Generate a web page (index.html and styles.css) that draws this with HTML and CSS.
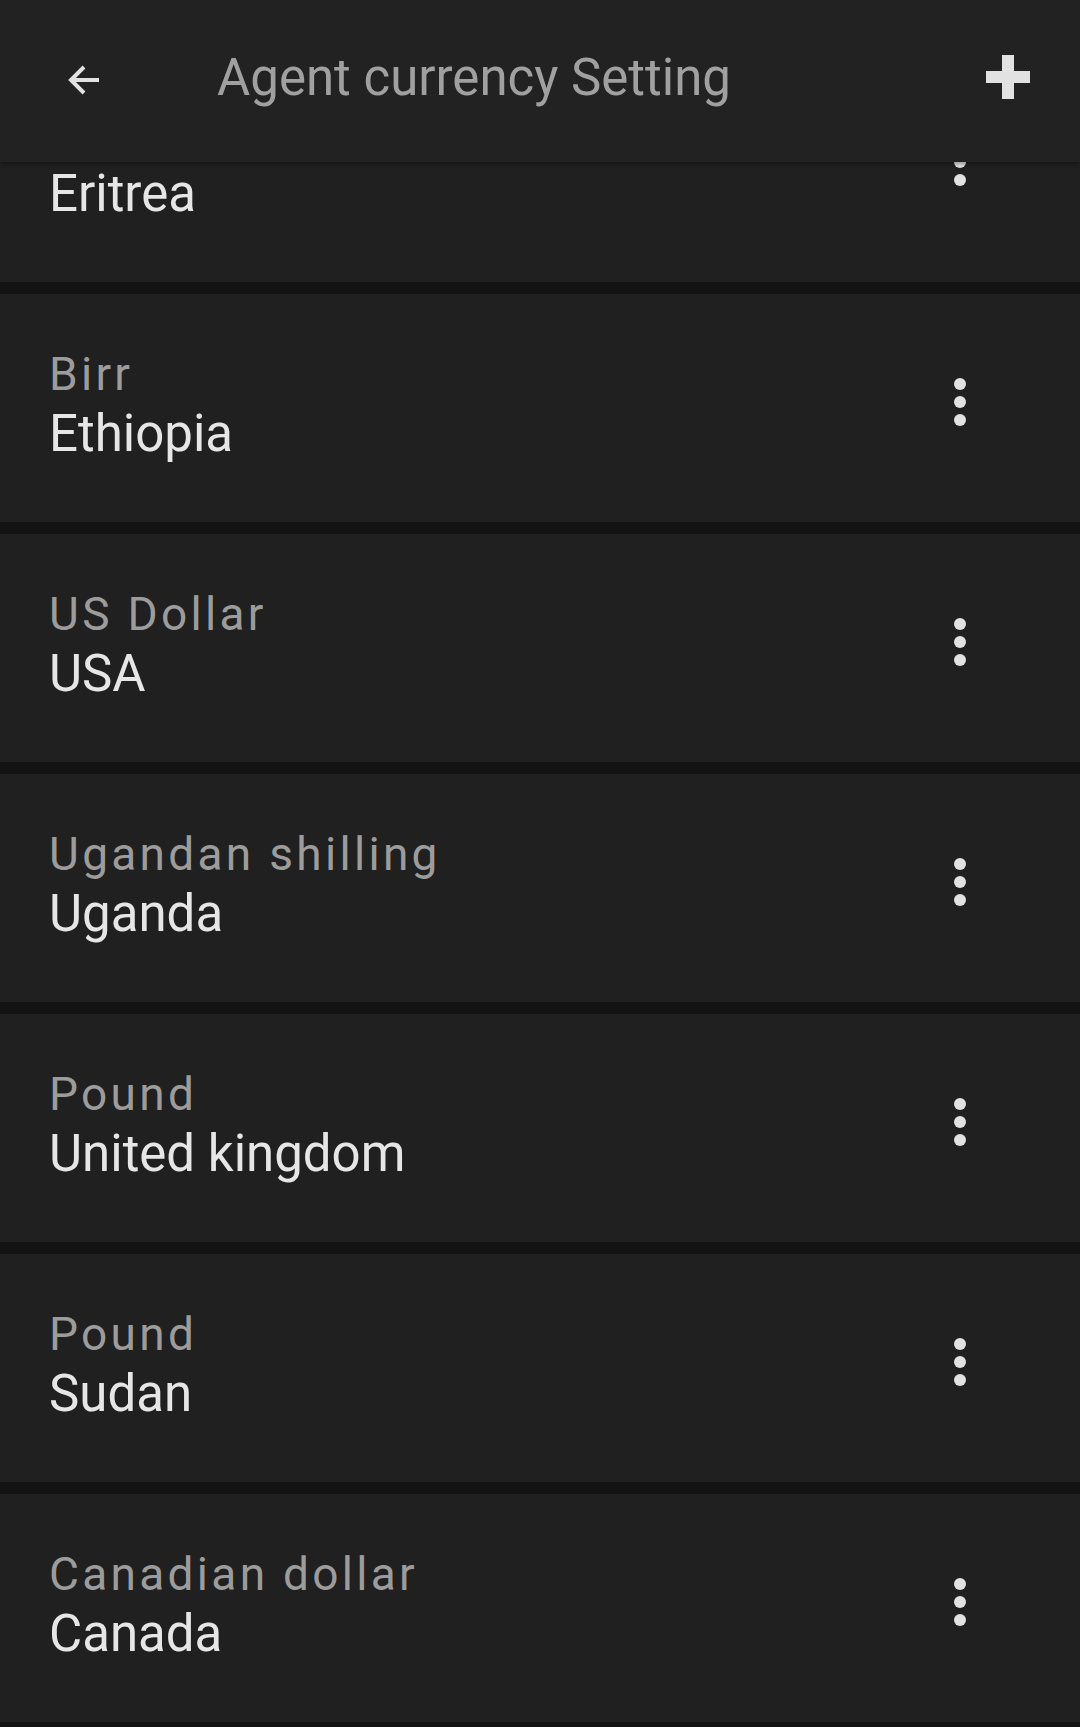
FILE: index.html
```html
<!DOCTYPE html>
<html>
<head>
<meta charset="utf-8">
<link rel="stylesheet" href="styles.css">
</head>
<body>
<header class="appbar">
  <svg class="back" width="34" height="32" viewBox="0 0 34 32"><path d="M32 16H4M17 3L4 16l13 13" fill="none" stroke="#e2e2e2" stroke-width="4"/></svg>
  <div class="title">Agent currency Setting</div>
  <svg class="plus" width="44" height="44" viewBox="0 0 44 44"><path d="M16 0h12v16h16v12H28v16H16V28H0V16h16z" fill="#e2e2e2"/></svg>
</header>
<main class="list">
  <div class="card"><div class="texts"><div class="sub">Nakfa</div><div class="main">Eritrea</div></div><svg class="dots" width="12" height="48" viewBox="0 0 12 48"><circle cx="6" cy="6" r="6"/><circle cx="6" cy="24" r="6"/><circle cx="6" cy="42" r="6"/></svg></div>
  <div class="card"><div class="texts"><div class="sub">Birr</div><div class="main">Ethiopia</div></div><svg class="dots" width="12" height="48" viewBox="0 0 12 48"><circle cx="6" cy="6" r="6"/><circle cx="6" cy="24" r="6"/><circle cx="6" cy="42" r="6"/></svg></div>
  <div class="card"><div class="texts"><div class="sub">US Dollar</div><div class="main">USA</div></div><svg class="dots" width="12" height="48" viewBox="0 0 12 48"><circle cx="6" cy="6" r="6"/><circle cx="6" cy="24" r="6"/><circle cx="6" cy="42" r="6"/></svg></div>
  <div class="card"><div class="texts"><div class="sub">Ugandan shilling</div><div class="main">Uganda</div></div><svg class="dots" width="12" height="48" viewBox="0 0 12 48"><circle cx="6" cy="6" r="6"/><circle cx="6" cy="24" r="6"/><circle cx="6" cy="42" r="6"/></svg></div>
  <div class="card"><div class="texts"><div class="sub">Pound</div><div class="main">United kingdom</div></div><svg class="dots" width="12" height="48" viewBox="0 0 12 48"><circle cx="6" cy="6" r="6"/><circle cx="6" cy="24" r="6"/><circle cx="6" cy="42" r="6"/></svg></div>
  <div class="card"><div class="texts"><div class="sub">Pound</div><div class="main">Sudan</div></div><svg class="dots" width="12" height="48" viewBox="0 0 12 48"><circle cx="6" cy="6" r="6"/><circle cx="6" cy="24" r="6"/><circle cx="6" cy="42" r="6"/></svg></div>
  <div class="card"><div class="texts"><div class="sub">Canadian dollar</div><div class="main">Canada</div></div><svg class="dots" width="12" height="48" viewBox="0 0 12 48"><circle cx="6" cy="6" r="6"/><circle cx="6" cy="24" r="6"/><circle cx="6" cy="42" r="6"/></svg></div>
</main>
</body>
</html>
```
FILE: styles.css
```css
html, body {
  margin: 0;
  padding: 0;
  background: #121212;
  font-family: Roboto, "Liberation Sans", sans-serif;
  height: 1727px;
  overflow: hidden;
}
.appbar {
  position: fixed;
  top: 0;
  left: 0;
  right: 0;
  height: 162px;
  background: #222222;
  box-shadow: 0 2px 4px rgba(0,0,0,0.35);
  z-index: 10;
  display: flex;
  align-items: center;
}
.back {
  margin-left: 67px;
  margin-top: -2px;
  flex: none;
}
.title {
  margin-left: 116px;
  font-size: 51px;
  color: #a0a0a0;
  flex: 1;
  margin-top: -8px;
}
.plus {
  margin-right: 50px;
  margin-top: -8px;
  flex: none;
}
.list {
  padding-top: 54px;
  display: flex;
  flex-direction: column;
  gap: 12px;
}
.card {
  box-sizing: border-box;
  height: 228px;
  background: #202020;
  padding: 49px 114px 0 49px;
  display: flex;
  justify-content: space-between;
  align-items: flex-start;
}
.sub {
  font-size: 46px;
  line-height: 62px;
  color: #9c9c9c;
  letter-spacing: 3.3px;
}
.main {
  font-size: 51px;
  line-height: 58px;
  color: #e6e6e6;
}
.dots {
  margin-top: 35px;
  fill: #e2e2e2;
  flex: none;
}
```
